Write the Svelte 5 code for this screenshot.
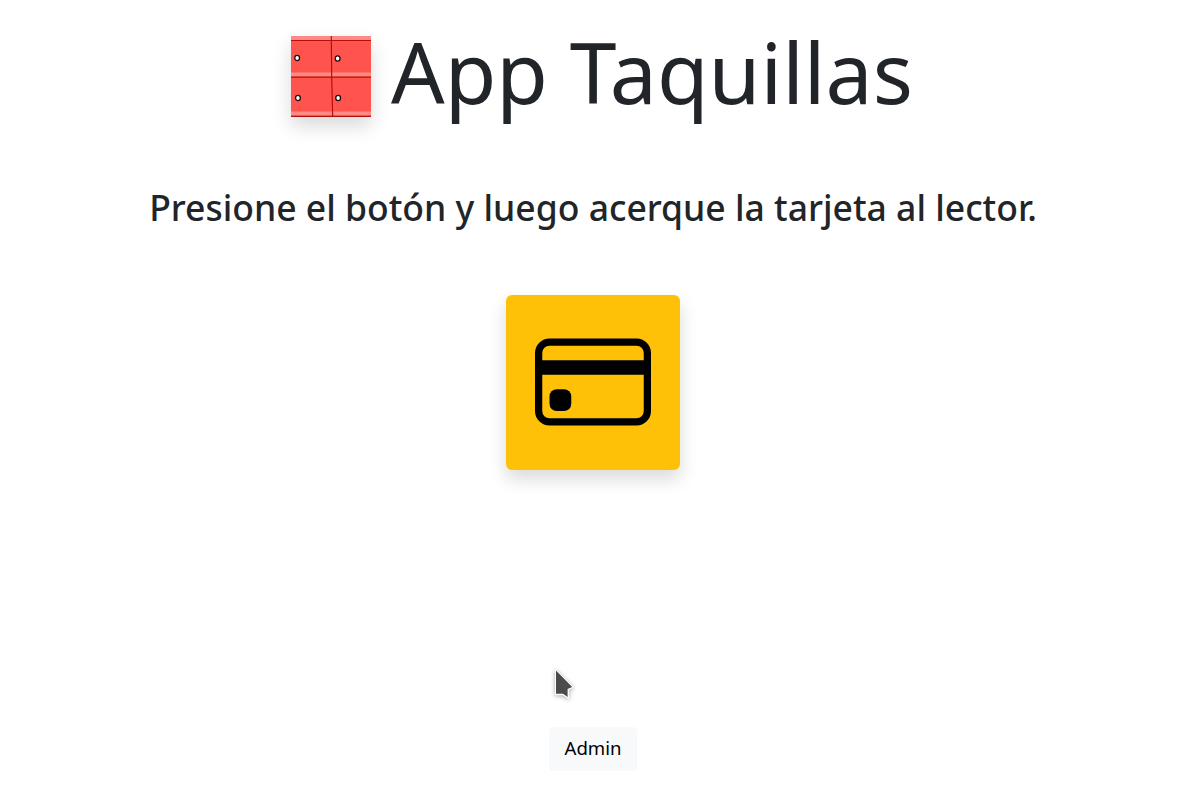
<script>
  const title = 'App Taquillas';
  const knobs = [[6.2, 22], [47, 22.5], [7, 62], [47.5, 62]];
</script>

<main>
  <h1>
    <svg class="logo" viewBox="0 0 81 81" preserveAspectRatio="none" aria-hidden="true">
      <rect width="81" height="81" fill="#ff544d" />
      <path d="M0 2h81M0 38.5h81M0 77.5h81" stroke="#ff8a84" stroke-width="4" />
      <path d="M0 4.5h81M0 41.2h81M0 80.4h81M40.6 0L41 41L42 81" fill="none" stroke="#b5100e" stroke-width="1.2" />
      {#each knobs as [x, y]}
        <ellipse cx={x} cy={y} rx="2.4" ry="2.6" fill="#fff" stroke="#111" stroke-width="1.3" />
      {/each}
    </svg>
    <span>{title}</span>
  </h1>
  <h2>Presione el botón y luego acerque la tarjeta al lector.</h2>
  <button class="card" aria-label="Tarjeta">
    <svg viewBox="0 0 16 16" fill="currentColor">
      <path d="M0 4a2 2 0 0 1 2-2h12a2 2 0 0 1 2 2v8a2 2 0 0 1-2 2H2a2 2 0 0 1-2-2V4zm2-1a1 1 0 0 0-1 1v1h14V4a1 1 0 0 0-1-1H2zm13 4H1v5a1 1 0 0 0 1 1h12a1 1 0 0 0 1-1V7z" />
      <path d="M2 10a1 1 0 0 1 1-1h1a1 1 0 0 1 1 1v1a1 1 0 0 1-1 1H3a1 1 0 0 1-1-1v-1z" />
    </svg>
  </button>
  <button class="admin">Admin</button>
  <svg class="cursor" viewBox="0 0 32 42" aria-hidden="true">
    <path d="M7.5 7.2L25.2 25L20.7 27.6V36.4L14.8 32.7H7.5Z" fill="#fff" stroke="#fff" stroke-width="1" stroke-linejoin="round" />
    <path d="M8 8.5L24.2 25L19.6 27V35L15 31.8H8Z" fill="#4b4b4b" />
  </svg>
</main>

<style>
  :global(body) {
    background: #fff;
  }
  main {
    box-sizing: border-box;
    height: 792px;
    padding: 21px 0;
    display: flex;
    flex-direction: column;
    align-items: center;
    overflow: hidden;
    color: #212529;
    font-family: "Noto Sans", sans-serif;
  }
  h1 {
    margin: 0;
    height: 101px;
    display: flex;
    align-items: center;
    gap: 19.5px;
    padding-left: 18px;
    font-size: 84px;
    font-weight: 400;
    line-height: 101px;
    white-space: nowrap;
  }
  .logo {
    width: 80.4px;
    height: 81px;
    margin-top: 9px;
    box-shadow: 0 9px 18px rgba(0, 0, 0, 0.15);
  }
  h2 {
    margin: 64px 0 0;
    font-size: 35.5px;
    font-weight: 500;
    line-height: 43px;
    white-space: nowrap;
  }
  button {
    border: 0;
    padding: 0;
    font-family: inherit;
    color: #000;
  }
  .card {
    box-sizing: border-box;
    flex: none;
    width: 174px;
    height: 175px;
    margin-top: 66px;
    padding-bottom: 1px;
    display: grid;
    place-items: center;
    border-radius: 6px;
    background: #ffc107;
    box-shadow: 0 9px 18px rgba(0, 0, 0, 0.15);
  }
  .card svg {
    width: 116px;
    height: 116px;
  }
  .admin {
    box-sizing: border-box;
    width: 88px;
    height: 44px;
    margin-top: auto;
    padding-bottom: 4px;
    border-radius: 4px;
    background: #f8f9fa;
    font-size: 18.6px;
    line-height: 27px;
  }
  .cursor {
    position: absolute;
    left: 548px;
    top: 662px;
    width: 32px;
    height: 42px;
    filter: drop-shadow(0 1px 2px rgba(0, 0, 0, 0.35));
  }
</style>
